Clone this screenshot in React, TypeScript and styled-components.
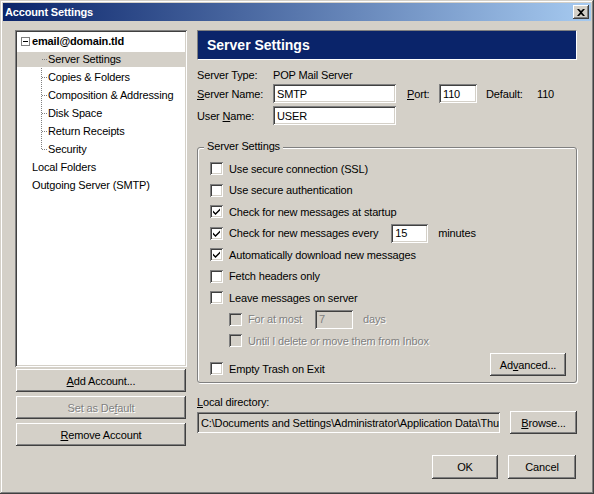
import React from "react";
import styled, { createGlobalStyle, css } from "styled-components";

const GlobalStyle = createGlobalStyle`
  html, body {
    margin: 0;
    padding: 0;
    background: #d4d0c8;
  }
  body {
    font-family: "Liberation Sans", Arial, sans-serif;
    font-size: 11px;
    letter-spacing: -0.15px;
    color: #000;
  }
`;

const raised = css`
  background: #d4d0c8;
  box-shadow: inset -1px -1px #404040, inset 1px 1px #ffffff,
    inset -2px -2px #808080, inset 2px 2px #d4d0c8;
`;

const sunken = css`
  box-shadow: inset 1px 1px #808080, inset -1px -1px #ffffff,
    inset 2px 2px #404040, inset -2px -2px #d4d0c8;
`;

const disabledText = css`
  color: #808080;
  text-shadow: 1px 1px #fff;
`;

const Window = styled.div`
  width: 594px;
  height: 494px;
  box-sizing: border-box;
  padding: 3px;
  display: flex;
  flex-direction: column;
  background: #d4d0c8;
  box-shadow: inset -1px -1px #404040, inset 1px 1px #d4d0c8,
    inset -2px -2px #808080, inset 2px 2px #ffffff;
`;

const TitleBar = styled.div`
  height: 18px;
  flex: none;
  display: flex;
  align-items: center;
  justify-content: space-between;
  padding: 0 2px;
  background: linear-gradient(to right, #0a246a, #a6caf0);
  color: #fff;
  font-weight: bold;
`;

const CloseButton = styled.div`
  ${raised};
  width: 16px;
  height: 14px;
  display: flex;
  align-items: center;
  justify-content: center;
`;

const Body = styled.div`
  display: flex;
  gap: 10px;
  padding: 9px 14px 0 12px;
`;

const LeftColumn = styled.div`
  width: 172px;
  display: flex;
  flex-direction: column;
`;

const Tree = styled.div`
  ${sunken};
  height: 337px;
  box-sizing: border-box;
  padding: 2px;
  background: #fff;
`;

const TreeRow = styled.div<{ $indent: number; $bold?: boolean; $selected?: boolean }>`
  position: relative;
  height: 18px;
  display: flex;
  align-items: center;
  padding-left: ${(p) => p.$indent}px;
  font-weight: ${(p) => (p.$bold ? "bold" : "normal")};
  white-space: nowrap;
  ${(p) =>
    p.$selected &&
    css`
      background: #d4d0c8;
      box-shadow: inset 0 2px #fff, inset 0 -1px #fff;
    `}
`;

const TreeChildren = styled.div`
  position: relative;
  &::before {
    content: "";
    position: absolute;
    left: 24px;
    top: 1px;
    bottom: 9px;
    border-left: 1px dotted #808080;
  }
  ${TreeRow}::after {
    content: "";
    position: absolute;
    left: 25px;
    top: 9px;
    width: 5px;
    border-top: 1px dotted #808080;
  }
`;

const Expander = styled.span`
  width: 9px;
  height: 9px;
  box-sizing: border-box;
  border: 1px solid #808080;
  background: #fff;
  margin-right: 2px;
  display: flex;
  align-items: center;
  justify-content: center;
  &::before {
    content: "";
    width: 5px;
    border-top: 1px solid #000;
  }
`;

const Button = styled.div<{ $w?: number; $h?: number; $disabled?: boolean }>`
  ${raised};
  box-sizing: border-box;
  width: ${(p) => (p.$w ? `${p.$w}px` : "auto")};
  height: ${(p) => p.$h ?? 23}px;
  display: flex;
  align-items: center;
  justify-content: center;
  flex: none;
  ${(p) => p.$disabled && disabledText}
`;

const SideButtons = styled.div`
  display: flex;
  flex-direction: column;
  gap: 4px;
  margin: 2px 1px 0;
`;

const RightColumn = styled.div`
  width: 380px;
  display: flex;
  flex-direction: column;
`;

const PageHeader = styled.div`
  height: 30px;
  box-sizing: border-box;
  display: flex;
  align-items: center;
  padding-left: 9px;
  background: #0a246a;
  border: 1px solid;
  border-color: #808080 #fff #fff #808080;
  color: #fff;
  font-size: 14px;
  font-weight: bold;
  letter-spacing: 0;
`;

const InfoRow = styled.div<{ $h?: number; $mt?: number }>`
  display: flex;
  align-items: center;
  height: ${(p) => p.$h ?? 19}px;
  margin-top: ${(p) => p.$mt ?? 0}px;
`;

const FieldLabel = styled.span<{ $w: number; $ml?: number }>`
  width: ${(p) => p.$w}px;
  margin-left: ${(p) => p.$ml ?? 0}px;
  flex: none;
  white-space: nowrap;
`;

const TextField = styled.div<{ $w: number; $h?: number; $disabled?: boolean; $ml?: number; $bg?: string }>`
  ${sunken};
  box-sizing: border-box;
  width: ${(p) => p.$w}px;
  height: ${(p) => p.$h ?? 19}px;
  margin-left: ${(p) => p.$ml ?? 0}px;
  padding: 0 4px;
  display: flex;
  align-items: center;
  flex: none;
  overflow: hidden;
  white-space: nowrap;
  background: ${(p) => p.$bg ?? (p.$disabled ? "#d4d0c8" : "#fff")};
  color: ${(p) => (p.$disabled ? "#808080" : "#000")};
`;

const GroupBox = styled.div`
  position: relative;
  margin-top: 22px;
  height: 236px;
  box-sizing: border-box;
  padding: 10px 9px 0 12px;
  border: 1px solid #808080;
  border-radius: 3px;
  box-shadow: inset 1px 1px #fff, 1px 1px #fff;
`;

const Legend = styled.span`
  position: absolute;
  top: -8px;
  left: 6px;
  padding: 0 3px;
  background: #d4d0c8;
`;

const CheckRow = styled.div<{ $indent?: number }>`
  height: 21.5px;
  display: flex;
  align-items: center;
  padding-left: ${(p) => p.$indent ?? 0}px;
  white-space: nowrap;
`;

const Box = styled.span<{ $disabled?: boolean }>`
  ${sunken};
  width: 13px;
  height: 13px;
  flex: none;
  margin-right: 6px;
  background: ${(p) => (p.$disabled ? "#d4d0c8" : "#fff")};
  display: flex;
  align-items: center;
  justify-content: center;
`;

const CheckText = styled.span<{ $disabled?: boolean }>`
  ${(p) => p.$disabled && disabledText}
`;

const Suffix = styled.span<{ $disabled?: boolean }>`
  margin-left: 10px;
  ${(p) => p.$disabled && disabledText}
`;

const LastRow = styled.div`
  display: flex;
  justify-content: space-between;
  align-items: flex-start;
  margin-top: 1.5px;
  padding-right: 1px;
  ${CheckRow} {
    margin-top: 5px;
  }
`;

const DirLabel = styled.div`
  height: 16px;
  margin-top: 11px;
  display: flex;
  align-items: center;
`;

const DirRow = styled.div`
  display: flex;
  align-items: center;
  gap: 10px;
  margin-top: 1px;
`;

const Footer = styled.div`
  display: flex;
  justify-content: flex-end;
  gap: 10px;
  margin-top: 9px;
  padding-right: 15px;
`;

const CloseGlyph = () => (
  <svg width="8" height="7" viewBox="0 0 8 7">
    <path d="M0 0h2l2 2 2-2h2L5 3.5 8 7H6L4 5 2 7H0l3-3.5z" fill="#000" />
  </svg>
);

const Tick = () => (
  <svg width="9" height="9" viewBox="0 0 9 9">
    <path d="M1 3.5 L3.5 6 L8 1.5 V3.5 L3.5 8 L1 5.5 Z" fill="#000" />
  </svg>
);

const Check: React.FC<{
  label: React.ReactNode;
  checked?: boolean;
  disabled?: boolean;
  indent?: number;
  children?: React.ReactNode;
}> = ({ label, checked, disabled, indent, children }) => (
  <CheckRow $indent={indent}>
    <Box $disabled={disabled}>{checked && <Tick />}</Box>
    <CheckText $disabled={disabled}>{label}</CheckText>
    {children}
  </CheckRow>
);

const panels = [
  "Server Settings",
  "Copies & Folders",
  "Composition & Addressing",
  "Disk Space",
  "Return Receipts",
  "Security",
];

export default function App() {
  return (
    <>
      <GlobalStyle />
      <Window>
        <TitleBar>
          <span>Account Settings</span>
          <CloseButton>
            <CloseGlyph />
          </CloseButton>
        </TitleBar>
        <Body>
          <LeftColumn>
            <Tree>
              <TreeRow $indent={4} $bold>
                <Expander />
                email@domain.tld
              </TreeRow>
              <TreeChildren>
                {panels.map((p, i) => (
                  <TreeRow key={p} $indent={31} $selected={i === 0}>
                    {p}
                  </TreeRow>
                ))}
              </TreeChildren>
              <TreeRow $indent={15}>Local Folders</TreeRow>
              <TreeRow $indent={15}>Outgoing Server (SMTP)</TreeRow>
            </Tree>
            <SideButtons>
              <Button>
                <span>
                  <u>A</u>dd Account...
                </span>
              </Button>
              <Button $disabled>
                <span>
                  Set as De<u>f</u>ault
                </span>
              </Button>
              <Button>
                <span>
                  <u>R</u>emove Account
                </span>
              </Button>
            </SideButtons>
          </LeftColumn>

          <RightColumn>
            <PageHeader>Server Settings</PageHeader>
            <InfoRow $h={18} $mt={6}>
              <FieldLabel $w={76}>Server Type:</FieldLabel>
              <span>POP Mail Server</span>
            </InfoRow>
            <InfoRow>
              <FieldLabel $w={76}>
                <u>S</u>erver Name:
              </FieldLabel>
              <TextField $w={123}>SMTP</TextField>
              <FieldLabel $w={32} $ml={11}>
                <u>P</u>ort:
              </FieldLabel>
              <TextField $w={38}>110</TextField>
              <FieldLabel $w={51} $ml={9}>
                Default:
              </FieldLabel>
              <span>110</span>
            </InfoRow>
            <InfoRow $mt={3}>
              <FieldLabel $w={76}>
                User <u>N</u>ame:
              </FieldLabel>
              <TextField $w={123}>USER</TextField>
            </InfoRow>

            <GroupBox>
              <Legend>Server Settings</Legend>
              <Check label="Use secure connection (SSL)" />
              <Check label="Use secure authentication" />
              <Check label="Check for new messages at startup" checked />
              <Check label="Check for new messages every" checked>
                <TextField $w={37} $ml={13}>
                  15
                </TextField>
                <Suffix>minutes</Suffix>
              </Check>
              <Check label="Automatically download new messages" checked />
              <Check label="Fetch headers only" />
              <Check label="Leave messages on server" />
              <Check label="For at most" disabled indent={19}>
                <TextField $w={38} $ml={13} $disabled>
                  7
                </TextField>
                <Suffix $disabled>days</Suffix>
              </Check>
              <Check
                label="Until I delete or move them from Inbox"
                disabled
                indent={19}
              />
              <LastRow>
                <Check label="Empty Trash on Exit" />
                <Button $w={76}>
                  <span>
                    Ad<u>v</u>anced...
                  </span>
                </Button>
              </LastRow>
            </GroupBox>

            <DirLabel>
              <span>
                <u>L</u>ocal directory:
              </span>
            </DirLabel>
            <DirRow>
              <TextField $w={303} $h={21} $bg="#d4d0c8">
                C:\Documents and Settings\Administrator\Application Data\Thu
              </TextField>
              <Button $w={67}>
                <span>
                  <u>B</u>rowse...
                </span>
              </Button>
            </DirRow>
          </RightColumn>
        </Body>
        <Footer>
          <Button $w={66} $h={24}>
            OK
          </Button>
          <Button $w={68} $h={24}>
            Cancel
          </Button>
        </Footer>
      </Window>
    </>
  );
}
